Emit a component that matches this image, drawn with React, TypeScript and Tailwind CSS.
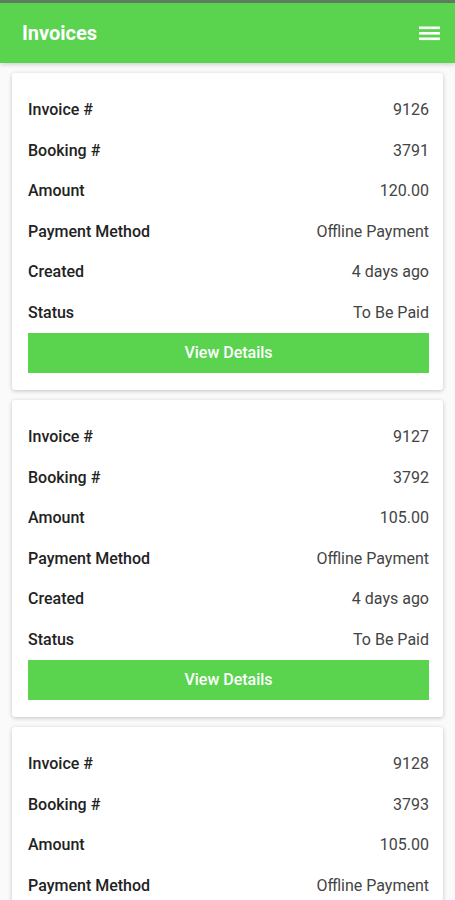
import React from "react";

const invoices = [
  { inv: "9126", booking: "3791", amount: "120.00" },
  { inv: "9127", booking: "3792", amount: "105.00" },
  { inv: "9128", booking: "3793", amount: "105.00" },
];

function Row({ label, value }: { label: string; value: string }) {
  return (
    <div className="flex h-[40.5px] items-center justify-between">
      <span className="text-[16px] font-medium text-[#222]">{label}</span>
      <span className="text-[16px] text-[#444]">{value}</span>
    </div>
  );
}

export default function App() {
  return (
    <div
      className="h-[900px] overflow-hidden bg-[#fafafa]"
      style={{ fontFamily: "Roboto, 'Noto Sans', sans-serif" }}
    >
      <div className="h-[3px] bg-[#5f7d5c]" />
      <div className="flex h-[60px] items-center justify-between bg-[#5ad34f] pl-[22px] pr-[14px] shadow-[0_2px_4px_rgba(0,0,0,0.15)]">
        <span className="text-[20px] font-bold text-white">Invoices</span>
        <svg width="22" height="18" viewBox="0 0 22 18">
          <rect x="0" y="2.5" width="21" height="2.6" fill="white" />
          <rect x="0" y="8" width="21" height="2.6" fill="white" />
          <rect x="0" y="13.5" width="21" height="2.6" fill="white" />
        </svg>
      </div>
      <div className="flex flex-col gap-[10px] px-[12px] pt-[10px]">
        {invoices.map((i) => (
          <div
            key={i.inv}
            className="rounded-[3px] bg-white pl-[16px] pr-[14px] pt-[17px] pb-[17px] shadow-[0_1px_4px_rgba(0,0,0,0.22)]"
          >
            <Row label="Invoice #" value={i.inv} />
            <Row label="Booking #" value={i.booking} />
            <Row label="Amount" value={i.amount} />
            <Row label="Payment Method" value="Offline Payment" />
            <Row label="Created" value="4 days ago" />
            <Row label="Status" value="To Be Paid" />
            <button className="flex h-[40px] w-full items-center justify-center bg-[#5ad34f] text-[16px] font-medium text-white">
              View Details
            </button>
          </div>
        ))}
      </div>
    </div>
  );
}
